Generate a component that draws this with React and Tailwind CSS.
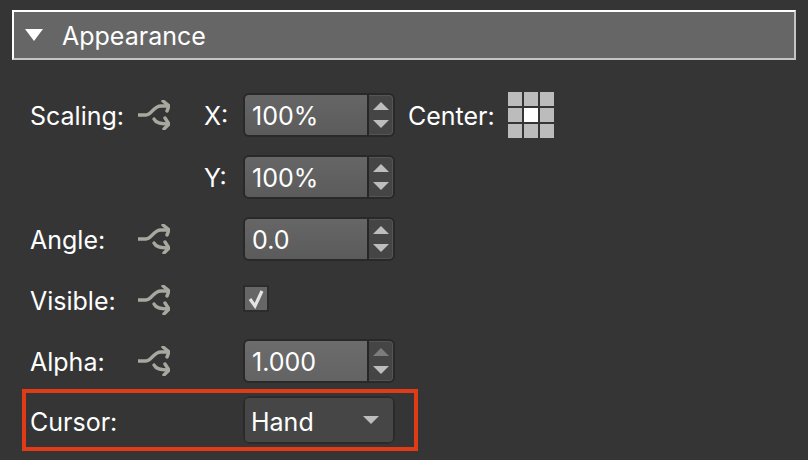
const Mix = () => (
    <svg width="34" height="30" viewBox="0 0 34 30" fill="none" stroke="#a8a8a0" strokeWidth="3.4" strokeLinecap="round" strokeLinejoin="round">
        <path d="M2 15 H10 C16 15 17 6 25 6 H32" strokeLinecap="butt" />
        <path d="M27 1 L33 6 L31 11" />
        <path d="M18 19 C20 23 24 24 32 24" />
        <path d="M29 18 L33 24 L28 29" />
    </svg>
);

const Spinner = ({ value, bright }) => (
    <div className="w-[152px] h-[44px] flex rounded-[6px] bg-[#292929] p-[2px]">
        <div className={`w-[122px] flex items-center pl-[7px] pt-[4px] rounded-l-[4px] bg-gradient-to-b ${bright ? "from-[#6c6c6c] to-[#636363]" : "from-[#666666] to-[#5b5b5b]"}`}>
            {value}
        </div>
        <div className="w-[2px] bg-[#262626]" />
        <div className="flex-1 flex flex-col items-center justify-center gap-[10px] rounded-r-[4px] bg-[#454545] border border-[#555555] border-l-0">
            <div className={`w-0 h-0 border-x-[8px] border-x-transparent border-b-[8px] ${bright ? "border-b-[#7c7c7c]" : "border-b-[#bdbdbd]"}`} />
            <div className="w-0 h-0 border-x-[8px] border-x-transparent border-t-[8px] border-t-[#bdbdbd]" />
        </div>
    </div>
);

const Row = ({ label, mix, axis, className = "", children }) => (
    <div className={`flex items-center h-[44px] ${className}`}>
        <div className="w-[106px] pt-[4px]">{label}</div>
        <div className="w-[34px] h-[30px]">{mix && <Mix />}</div>
        <div className="w-[73px] pl-[34px] pt-[4px]">{axis}</div>
        {children}
    </div>
);

const App = () => {
    return (
        <div className="w-[808px] h-[460px] overflow-hidden bg-[#353535] text-white text-[25px] font-['Inter','Liberation_Sans',sans-serif]">
            <div className="mx-[12px] mt-[10px] h-[50px] flex items-center bg-[#666666] border-2 border-t-white border-l-white border-b-[#c4c4c4] border-r-[#c4c4c4]">
                <div className="ml-[11px] w-0 h-0 border-x-[9px] border-x-transparent border-t-[12px] border-t-white" />
                <span className="ml-[19px] pt-[4px]">Appearance</span>
            </div>

            <div className="pl-[30px] pt-[33px]">
                <Row label="Scaling:" mix axis="X:">
                    <Spinner value="100%" />
                    <span className="ml-[13px] pt-[4px]">Center:</span>
                    <div className="ml-[13px] grid grid-cols-3 gap-[2px]">
                        {[0, 1, 2, 3, 4, 5, 6, 7, 8].map((i) => (
                            <div key={i} className={`w-[14px] h-[14px] ${i === 4 ? "bg-white" : "bg-[#bcbcbc]"}`} />
                        ))}
                    </div>
                </Row>
                <Row axis="Y:" className="mt-[18px]">
                    <Spinner value="100%" />
                </Row>
                <Row label="Angle:" mix className="mt-[18px]">
                    <Spinner value="0.0" />
                </Row>
                <Row label="Visible:" mix className="mt-[17px]">
                    <div className="w-[26px] h-[27px] -mt-[3px] flex items-center justify-center bg-[#666666] border-2 border-[#2c2c2c]">
                        <svg width="18" height="20" viewBox="0 0 18 20" fill="none" stroke="#e4e4e4" strokeWidth="3.2">
                            <path d="M3 10 L8 17 L15 2" />
                        </svg>
                    </div>
                </Row>
                <Row label="Alpha:" mix className="mt-[17px]">
                    <Spinner value="1.000" bright />
                </Row>
            </div>

            <div className="ml-[22px] mt-[6px] w-[396px] h-[62px] pl-[4px] flex items-center border-4 border-[#e03a16]">
                <div className="w-[217px] pt-[6px]">Cursor:</div>
                <div className="w-[152px] h-[48px] -ml-[4px] flex items-center justify-between pl-[6px] pr-[14px] rounded-[6px] bg-[#464646] border-2 border-[#5a5a5a] outline-2 -outline-offset-2 outline-[#2a2a2a]">
                    <span className="pt-[6px]">Hand</span>
                    <div className="w-0 h-0 border-x-[8px] border-x-transparent border-t-[8px] border-t-[#bdbdbd]" />
                </div>
            </div>
        </div>
    );
};

export default App;
